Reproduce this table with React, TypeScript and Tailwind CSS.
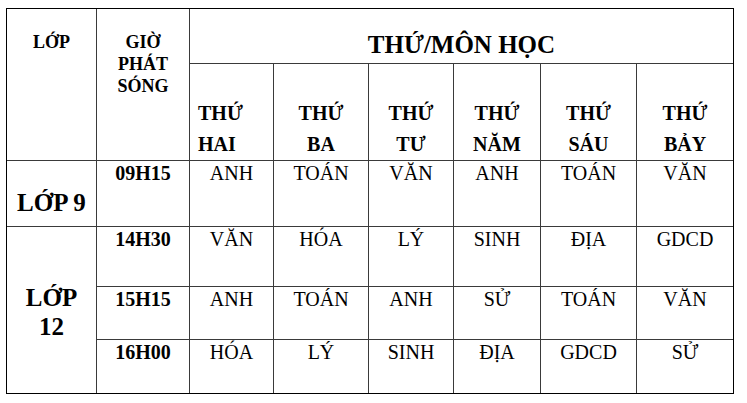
import React from "react";

const days: string[][] = [
  ["THỨ", "HAI"],
  ["THỨ", "BA"],
  ["THỨ", "TƯ"],
  ["THỨ", "NĂM"],
  ["THỨ", "SÁU"],
  ["THỨ", "BẢY"],
];

const rows: { time: string; subjects: string[] }[] = [
  { time: "09H15", subjects: ["ANH", "TOÁN", "VĂN", "ANH", "TOÁN", "VĂN"] },
  { time: "14H30", subjects: ["VĂN", "HÓA", "LÝ", "SINH", "ĐỊA", "GDCD"] },
  { time: "15H15", subjects: ["ANH", "TOÁN", "ANH", "SỬ", "TOÁN", "VĂN"] },
  { time: "16H00", subjects: ["HÓA", "LÝ", "SINH", "ĐỊA", "GDCD", "SỬ"] },
];

export default function App() {
  return (
    <div className="min-h-[403px] w-[747px] bg-white pt-[8px] pl-[6px] font-['Liberation_Serif','Times_New_Roman',serif] text-black">
      <div className="grid w-fit grid-cols-[89px_92px_83px_94px_84px_86px_95px_96px] grid-rows-[54px_96px_65px_59px_52px_53px] gap-px border border-black bg-[#3a3a3a]">
        {/* Header: LỚP */}
        <div className="row-span-2 bg-white pt-[22px] text-center text-[18px] font-bold leading-[22px]">
          LỚP
        </div>
        {/* Header: GIỜ PHÁT SÓNG */}
        <div className="row-span-2 bg-white pt-[22px] text-center text-[18px] font-bold leading-[22px]">
          GIỜ
          <br />
          PHÁT
          <br />
          SÓNG
        </div>
        {/* Header: THỨ/MÔN HỌC */}
        <div className="col-span-6 bg-white pt-[21px] text-center text-[25px] font-bold leading-[29px]">
          THỨ/MÔN HỌC
        </div>
        {/* Day sub-headers */}
        {days.map((d, i) => (
          <div
            key={i}
            className={
              i === 0
                ? "flex flex-col justify-end bg-white pl-[8px] text-left text-[20px] font-bold leading-[31px]"
                : "flex flex-col justify-end bg-white text-center text-[20px] font-bold leading-[31px]"
            }
          >
            <span>{d[0]}</span>
            <span>{d[1]}</span>
          </div>
        ))}

        {/* LỚP 9 row */}
        <div className="bg-white pt-[27px] text-center text-[25px] font-bold leading-[29px]">LỚP 9</div>
        <div className="bg-white text-center text-[20px] font-bold leading-[24px]">{rows[0].time}</div>
        {rows[0].subjects.map((s, j) => (
          <div key={j} className="bg-white text-center text-[20px] leading-[24px]">
            {s}
          </div>
        ))}

        {/* LỚP 12 block */}
        <div className="row-span-3 bg-white pt-[56px] text-center text-[25px] font-bold leading-[29px]">
          LỚP
          <br />
          12
        </div>
        {rows.slice(1).map((r, i) => (
          <React.Fragment key={i}>
            <div className="bg-white text-center text-[20px] font-bold leading-[24px]">{r.time}</div>
            {r.subjects.map((s, j) => (
              <div key={j} className="bg-white text-center text-[20px] leading-[24px]">
                {s}
              </div>
            ))}
          </React.Fragment>
        ))}
      </div>
    </div>
  );
}
